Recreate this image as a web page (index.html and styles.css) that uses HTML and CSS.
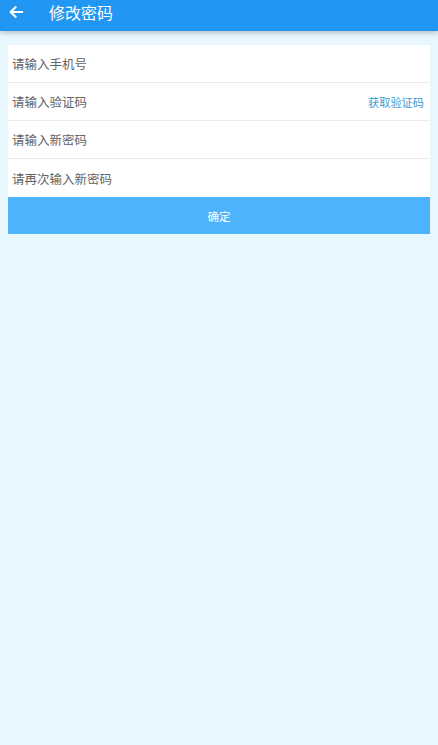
FILE: index.html
```html
<!DOCTYPE html>
<html lang="zh">
<head>
<meta charset="utf-8">
<title>修改密码</title>
<link rel="stylesheet" href="styles.css">
</head>
<body>
<header class="bar">
  <svg class="back" width="14" height="12" viewBox="0 0 14 12"><path d="M13 6H2M6.5 1.2L1.6 6l4.9 4.8" fill="none" stroke="#fff" stroke-width="2" stroke-linecap="square"/></svg>
  <span class="title">修改密码</span>
</header>
<main class="card">
  <div class="row"><span class="ph">请输入手机号</span></div>
  <div class="row"><span class="ph">请输入验证码</span><span class="code">获取验证码</span></div>
  <div class="row"><span class="ph">请输入新密码</span></div>
  <div class="row last"><span class="ph">请再次输入新密码</span></div>
  <div class="btn">确定</div>
</main>
</body>
</html>
```
FILE: styles.css
```css
html, body { margin: 0; padding: 0; }
body {
  background: #e8f6fe;
  font-family: "Noto Sans CJK SC", "Noto Sans", sans-serif;
  height: 745px;
}
.bar {
  height: 31px;
  background: #2196f3;
  display: flex;
  align-items: center;
  box-shadow: 0 2px 5px rgba(0,0,0,0.22);
}
.back { margin-left: 9px; margin-top: -8px; }
.title {
  color: #fff;
  font-size: 16px;
  margin-left: 26px;
  margin-top: -8px;
}
.card {
  margin: 14px 8px 0 8px;
  background: #fff;
}
.row {
  height: 37px;
  border-bottom: 1px solid #ececec;
  display: flex;
  align-items: center;
  justify-content: space-between;
  padding: 0 6px 0 4px;
  font-size: 12.5px;
}
.row.last { border-bottom: none; height: 38px; }
.ph { color: #646464; }
.code { color: #3b9ad8; font-size: 11.2px; }
.btn {
  height: 37px;
  background: #4eb3fd;
  color: #fff;
  font-size: 11.5px;
  display: flex;
  align-items: center;
  justify-content: center;
}
```
